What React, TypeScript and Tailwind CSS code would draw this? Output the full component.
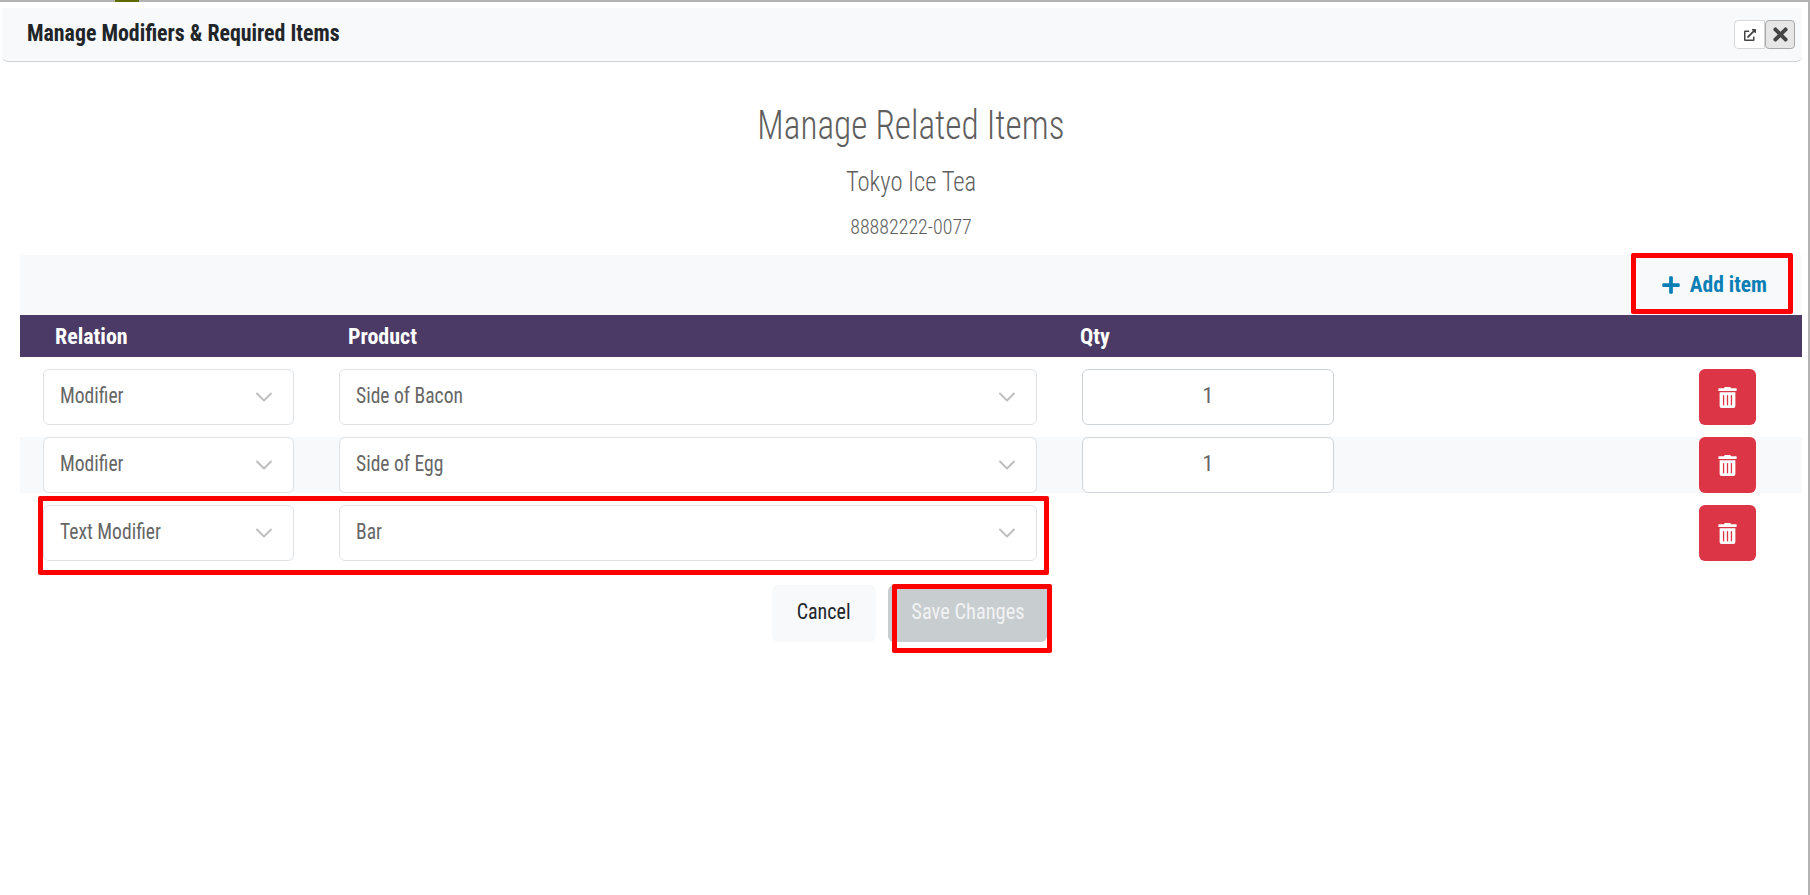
import React from "react";
import { FaPlus, FaTimes, FaTrashAlt, FaExternalLinkAlt } from "react-icons/fa";
import { ChevronDown } from "lucide-react";

const narrow = "font-['Roboto',sans-serif] [font-stretch:75%]";

function Select({ value, w }: { value: string; w: string }) {
  return (
    <div className={`${w} h-[56px] shrink-0 flex items-center justify-between bg-white border border-[#dee2e6] rounded-[6px] pl-[16px] pr-[15px] text-[22px] text-[#666]`}>
      <span className="inline-block origin-left scale-x-[0.89] whitespace-nowrap pb-[4px]">{value}</span>
      <ChevronDown size={28} strokeWidth={1.6} className="text-[#bdbdbd] shrink-0" />
    </div>
  );
}

function Row({ relation, product, qty, striped }: { relation: string; product: string; qty?: string; striped?: boolean }) {
  return (
    <div className={`flex items-center h-[56px] pl-[23px] pr-[46px] ${striped ? "bg-[#f8f9fa]" : "bg-white"}`}>
      <Select value={relation} w="w-[251px]" />
      <div className="w-[45px] shrink-0" />
      <Select value={product} w="w-[698px]" />
      <div className="w-[45px] shrink-0" />
      {qty ? (
        <div className="w-[252px] h-[56px] shrink-0 flex items-center justify-center border border-[#ced4da] rounded-[6px] bg-white text-[22px] text-[#666] pb-[4px]">{qty}</div>
      ) : null}
      <button className="ml-auto w-[57px] h-[56px] flex items-center justify-center rounded-[6px] bg-[#dc3545] text-white">
        <FaTrashAlt size={21} />
      </button>
    </div>
  );
}

export default function App() {
  return (
    <div className={`relative w-[1810px] h-[895px] overflow-hidden bg-white ${narrow}`}>
      <div className="h-[2px] bg-[#b3b3b3]" />
      <div className="absolute left-[115px] top-0 w-[24px] h-[2px] bg-[#5f6b00]" />
      <div className="absolute right-0 top-0 w-[2px] h-[895px] bg-[#b3b3b3]" />

      <div className="mt-[6px] ml-[2px] w-[1800px] h-[54px] flex items-center justify-between bg-[#f8f9fa] border-b border-[#d0d3d6] rounded-b-[6px] pl-[25px] pr-[7px]">
        <span className="inline-block origin-left scale-x-[0.95] text-[23px] font-bold text-[#212529] whitespace-nowrap">Manage Modifiers &amp; Required Items</span>
        <div className="flex">
          <div className="w-[31px] h-[29px] flex items-center justify-center bg-white border border-[#d5d8db] rounded-l-[4px] text-[#444]">
            <FaExternalLinkAlt size={12} />
          </div>
          <div className="w-[30px] h-[29px] flex items-center justify-center bg-[#e6e6e6] border border-[#a8a8a8] rounded-[4px] text-[#444]">
            <FaTimes size={21} />
          </div>
        </div>
      </div>

      <div className="ml-[20px] w-[1782px]">
        <div className="h-[193px] flex flex-col items-center text-[#5f5f5f]">
          <h1 className="mt-[39px] h-[50px] leading-[50px] text-[40px] font-light scale-x-[0.883] whitespace-nowrap">Manage Related Items</h1>
          <h2 className="mt-[13px] h-[36px] leading-[36px] text-[28px] font-light scale-x-[0.88] whitespace-nowrap">Tokyo Ice Tea</h2>
          <p className="mt-[14px] h-[26px] leading-[26px] text-[21px] font-light scale-x-[0.95] whitespace-nowrap">88882222-0077</p>
        </div>

        <div className="h-[60px] flex items-center justify-end bg-[#f8f9fa] pr-[35px]">
          <span className="flex items-center gap-[9px] text-[#0a7fb5] text-[21.5px] font-bold">
            <FaPlus size={20} />
            Add item
          </span>
        </div>

        <div className="h-[42px] flex items-center bg-[#4b3a66] text-white text-[22px] font-bold">
          <span className="ml-[35px] w-[293px]">Relation</span>
          <span className="w-[732px]">Product</span>
          <span>Qty</span>
        </div>

        <div className="flex flex-col gap-[12px] pt-[12px]">
          <Row relation="Modifier" product="Side of Bacon" qty="1" />
          <Row relation="Modifier" product="Side of Egg" qty="1" striped />
          <Row relation="Text Modifier" product="Bar" />
        </div>

        <div className="mt-[24px] flex justify-center gap-[12px] pr-[3px]">
          <button className="w-[104px] h-[57px] rounded-[6px] bg-[#f8f9fa] text-[22px] text-[#212529] pb-[5px]"><span className="inline-block scale-x-[0.91]">Cancel</span></button>
          <button className="w-[159px] h-[57px] rounded-[6px] bg-[#c8cdd0] text-[22px] text-[#f2f3f4] pb-[5px] whitespace-nowrap"><span className="inline-block scale-x-[0.93]">Save Changes</span></button>
        </div>
      </div>

      <div className="absolute left-[1631px] top-[253px] w-[162px] h-[61px] border-[5px] border-[#ff0000] rounded-[2px]" />
      <div className="absolute left-[38px] top-[496px] w-[1011px] h-[79px] border-[5px] border-[#ff0000] rounded-[2px]" />
      <div className="absolute left-[892px] top-[584px] w-[160px] h-[69px] border-[5px] border-[#ff0000] rounded-[2px]" />
    </div>
  );
}
